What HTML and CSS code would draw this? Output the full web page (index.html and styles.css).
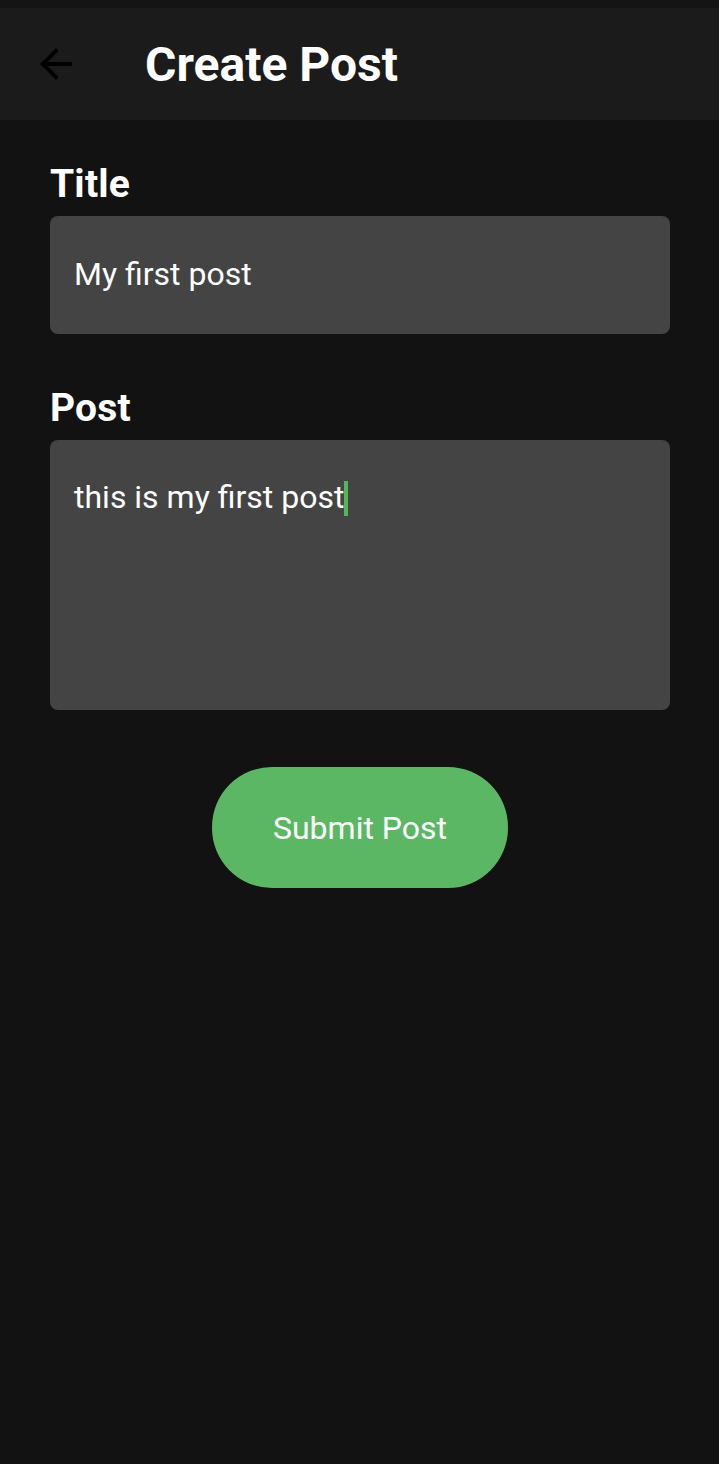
FILE: index.html
```html
<!DOCTYPE html>
<html>
<head>
<meta charset="utf-8">
<link rel="stylesheet" href="styles.css">
</head>
<body>
<div class="status"></div>
<header class="appbar">
  <svg class="back" viewBox="0 0 24 24" width="48" height="48"><path d="M20 11H7.83l5.59-5.59L12 4l-8 8 8 8 1.41-1.41L7.83 13H20v-2z" fill="#000"/></svg>
  <h1 class="title">Create Post</h1>
</header>
<main class="content">
  <label class="label">Title</label>
  <div class="field field-title">My first post</div>
  <label class="label label-post">Post</label>
  <div class="field field-post">this is my first post<span class="cursor"></span></div>
  <div class="actions"><button class="submit">Submit Post</button></div>
</main>
</body>
</html>
```
FILE: styles.css
```css
html, body { margin: 0; padding: 0; }
body {
  background: #121212;
  font-family: Roboto, "Noto Sans", sans-serif;
  color: #fff;
  width: 719px;
  height: 1464px;
  overflow: hidden;
}
.status { height: 8px; background: #141414; }
.appbar {
  height: 112px;
  background: #1b1b1b;
  display: flex;
  align-items: center;
}
.back { margin-left: 32px; flex: none; }
.title {
  margin: 0 0 0 65px;
  font-size: 48px;
  font-weight: 700;
  letter-spacing: 0;
}
.content {
  padding: 0 49px 0 50px;
  display: flex;
  flex-direction: column;
}
.label {
  font-size: 39px;
  font-weight: 700;
  line-height: 46px;
  margin-top: 41px;
  height: 55px;
  letter-spacing: 0.2px;
}
.label-post { margin-top: 51px; height: 55px; }
.field {
  background: #444444;
  border-radius: 8px;
  font-size: 32px;
  padding: 0 24px;
  box-sizing: border-box;
}
.field-title {
  height: 118px;
  line-height: 116px;
}
.field-post {
  height: 270px;
  padding-top: 39px;
  line-height: 36px;
}
.cursor {
  display: inline-block;
  width: 4px;
  height: 35px;
  background: #4fb85a;
  vertical-align: -8px;
  margin-left: 0;
}
.actions {
  display: flex;
  justify-content: center;
  margin-top: 57px;
}
.submit {
  width: 296px;
  height: 121px;
  border: none;
  border-radius: 60px;
  background: #5cb765;
  color: #fff;
  font-family: Roboto, "Noto Sans", sans-serif;
  font-size: 32px;
}
```
